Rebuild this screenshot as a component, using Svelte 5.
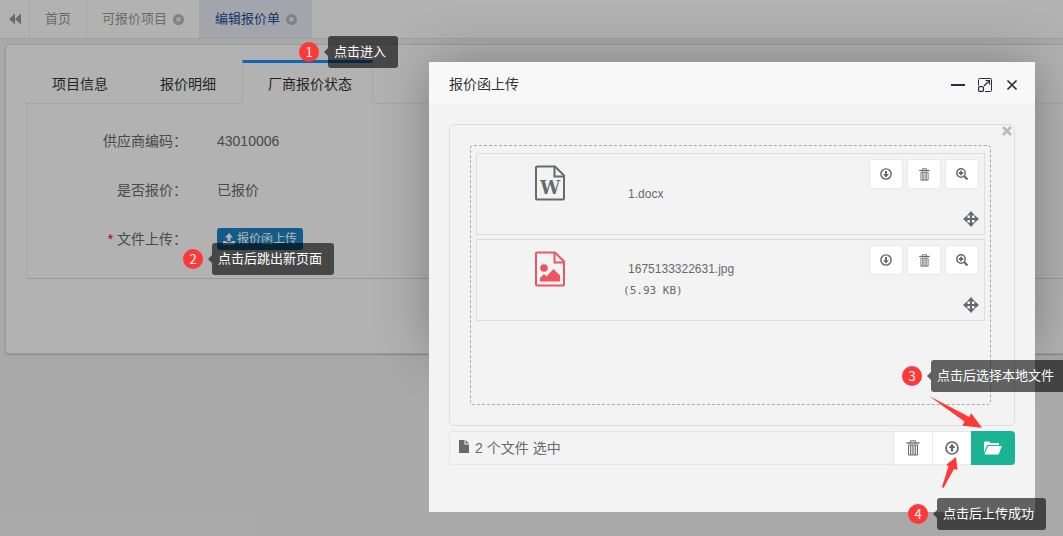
<script>
  let pages = [
    { title: '首页', closable: false },
    { title: '可报价项目', closable: true },
    { title: '编辑报价单', closable: true }
  ];
  let activePage = '编辑报价单';

  let sections = ['项目信息', '报价明细', '厂商报价状态'];
  let activeSection = '厂商报价状态';

  let files = [
    { name: '1.docx', type: 'word', size: '' },
    { name: '1675133322631.jpg', type: 'image', size: '(5.93 KB)' }
  ];
</script>

{#snippet trash(size)}
  <svg width={size} height={size} viewBox="0 0 16 16" fill="none" stroke="currentColor">
    <path d="M5.500 2.500V.8h5v1.700" />
    <path d="M1.500 3h13" stroke-width="1.400" />
    <path d="M3.500 5v10h9V5z" />
    <path d="M5.500 5v10M7.200 5v10M8.900 5v10M10.600 5v10" stroke-width=".9" />
  </svg>
{/snippet}

{#snippet circleArrow(size, up)}
  <svg width={size} height={size} viewBox="0 0 14 14">
    <circle cx="7" cy="7" r="6" fill="none" stroke="currentColor" stroke-width="1.700" />
    <path
      d={up ? 'M7 2.800L10.500 7H8.200v3.500H5.800V7H3.500z' : 'M7 11.200L3.500 7.200h2.300V3.500h2.400v3.700h2.300z'}
      fill="currentColor"
    />
  </svg>
{/snippet}

{#snippet note(number, text)}
  <span class="badge">{number}</span>
  <span class="tip">{text}</span>
{/snippet}

<div class="page">
  <nav class="pages">
    <button class="collapse" aria-label="向左">
      <svg width="12" height="12" viewBox="0 0 12 12" fill="currentColor">
        <path d="M6 .5v11L0 6zM12 .5v11L6 6z" />
      </svg>
    </button>
    {#each pages as page}
      <a href="#page" class:active={page.title === activePage}>
        {page.title}
        {#if page.closable}
          <svg width="11" height="11" viewBox="0 0 12 12">
            <circle cx="6" cy="6" r="6" fill="currentColor" />
            <path d="M4 4l4 4M8 4l-4 4" stroke="#fff" stroke-width="1.600" />
          </svg>
        {/if}
      </a>
    {/each}
  </nav>

  <main class="panel">
    <div class="sections">
      {#each sections as section}
        <button class:active={section === activeSection}>{section}</button>
      {/each}
    </div>
    <dl class="details">
      <dt>供应商编码：</dt>
      <dd>43010006</dd>
      <dt>是否报价：</dt>
      <dd>已报价</dd>
      <dt><span class="required">*</span> 文件上传：</dt>
      <dd>
        <button class="upload">
          <svg width="12" height="12" viewBox="0 0 12 12" fill="currentColor">
            <path d="M6 0l4 4.500H7.500V8h-3V4.500H2zM0 8h3.500v1.200h5V8H12v3.500H0z" />
          </svg>
          报价函上传
        </button>
      </dd>
    </dl>
  </main>

  <div class="shade"></div>
  <div class="note enter">{@render note(1, '点击进入')}</div>
  <div class="note popup">{@render note(2, '点击后跳出新页面')}</div>

  <section class="modal">
    <header>
      <h1>报价函上传</h1>
      <button aria-label="最小化">
        <svg width="14" height="14" viewBox="0 0 14 14"><path d="M0 6h14v2H0z" fill="currentColor" /></svg>
      </button>
      <button aria-label="最大化">
        <svg width="14" height="14" viewBox="0 0 14 14" fill="none" stroke="currentColor">
          <path d="M.5 7.500V1.500Q.5.5 1.500.5H12.500Q13.500.5 13.500 1.500V12.500Q13.500 13.500 12.500 13.500H7" />
          <rect x=".6" y="8.600" width="4.800" height="4.800" rx="1" stroke-width="1.200" />
          <path d="M6 8l5.500-5.500M7.500 2.500h4v4" stroke-width="1.200" />
        </svg>
      </button>
      <button aria-label="关闭">
        <svg width="14" height="14" viewBox="0 0 14 14" fill="none" stroke="currentColor" stroke-width="1.700">
          <path d="M2.500 2.500l9 9M11.500 2.500l-9 9" />
        </svg>
      </button>
    </header>

    <div class="body">
      <div class="preview">
        <button class="clear" aria-label="清空">
          <svg width="10" height="10" viewBox="0 0 10 10" stroke="currentColor" stroke-width="2.600">
            <path d="M1 1l8 8M9 1l-8 8" />
          </svg>
        </button>
        <div class="drop">
          {#each files as file}
            <div class="file">
              <div class="thumb {file.type}">
                <svg width="30" height="36" viewBox="0 0 30 36" fill="none" stroke="currentColor" stroke-width="2">
                  <path d="M2 1.500H20L29 10.500V33.500Q29 34.500 28 34.500H2Q1 34.500 1 33.500V2.500Q1 1.500 2 1.500z" />
                  <path d="M19.500 1.500V11.500H29" />
                  {#if file.type === 'word'}
                    <text x="15" y="29" text-anchor="middle" fill="currentColor" stroke="none">W</text>
                  {:else}
                    <circle cx="9" cy="17" r="3.800" fill="currentColor" stroke="none" />
                    <path d="M5 30.500V27l4-4 2.500 2.500 7-7.500 6.500 6.500v6z" fill="currentColor" stroke="none" />
                  {/if}
                </svg>
              </div>
              <div class="caption">
                <span class="name">{file.name}</span>
                {#if file.size}
                  <samp>{file.size}</samp>
                {/if}
              </div>
              <div class="tools">
                <div class="actions">
                  <button aria-label="下载">{@render circleArrow(12, false)}</button>
                  <button aria-label="删除">{@render trash(13)}</button>
                  <button aria-label="预览">
                    <svg width="12" height="12" viewBox="0 0 12 12" fill="none" stroke="currentColor">
                      <circle cx="5" cy="5" r="4.200" stroke-width="1.500" />
                      <path d="M5 2.800v4.400M2.800 5h4.400" stroke-width="1.800" />
                      <path d="M8 8l3.500 3.500" stroke-width="2.200" />
                    </svg>
                  </button>
                </div>
                <svg class="move" width="16" height="16" viewBox="0 0 16 16" fill="currentColor">
                  <path d="M8 0l4 4.500H9V7h2.500V4L16 8l-4.500 4V9H9v2.500h3L8 16l-4-4.500h3V9H4.500v3L0 8l4.500-4v3H7V4.500H4z" />
                </svg>
              </div>
            </div>
          {/each}
        </div>
      </div>

      <div class="bar">
        <div class="summary">
          <svg width="10" height="13" viewBox="0 0 10 13" fill="currentColor">
            <path d="M0 0h5.500v4.500H10V13H0zM6.500 0L10 3.500H6.500z" />
          </svg>
          2 个文件 选中
        </div>
        <button aria-label="移除">{@render trash(16)}</button>
        <button aria-label="上传">{@render circleArrow(14, true)}</button>
        <button class="browse" aria-label="选择">
          <svg width="20" height="14" viewBox="0 0 20 14" fill="currentColor">
            <path d="M1 12V1.500Q1 .5 2 .5h4l1.500 1.500H15q1 0 1 1V4H5Q4 4 3.600 5z" />
            <path d="M5 5h14L15.500 13.500H1.500z" />
          </svg>
        </button>

        <svg class="arrow down" width="54" height="33" viewBox="0 0 54 33">
          <path d="M0 0L40.500 21 42 17 53 31.700 33.500 29.700 35.500 25.500z" />
        </svg>
        <svg class="arrow up" width="17" height="32" viewBox="0 0 17 32">
          <path d="M14 0L15.500 13 12 12 1.500 31 0 30 6.500 9 4 8z" />
        </svg>
        <div class="note choose">{@render note(3, '点击后选择本地文件')}</div>
        <div class="note done">{@render note(4, '点击后上传成功')}</div>
      </div>
    </div>
  </section>
</div>

<style>
  :global(body) {
    background: #f3f3f4;
  }

  .page {
    position: relative;
    min-height: 100vh;
    overflow: hidden;
    font: 14px/20px "Liberation Sans", "Noto Sans CJK SC", sans-serif;
    color: #676a6c;
  }

  .page * {
    box-sizing: border-box;
  }

  svg {
    display: block;
    flex: none;
  }

  button {
    display: flex;
    align-items: center;
    justify-content: center;
    margin: 0;
    padding: 0;
    border: 0;
    background: none;
    font: inherit;
    color: inherit;
  }

  .pages {
    display: flex;
    height: 39px;
    background: #fff;
    border-bottom: 1px solid #e7e7e8;
    font-size: 13px;
    color: #999;
  }

  .collapse {
    width: 30px;
    border-right: 1px solid #eee;
  }

  .pages a {
    display: flex;
    align-items: center;
    gap: 6px;
    padding: 0 15px;
    border-right: 1px solid #eee;
    color: inherit;
    text-decoration: none;
  }

  .pages a svg {
    color: #bbb;
  }

  .pages a.active {
    border: 0;
    background: #eaedf6;
    color: #23508e;
  }

  .panel {
    height: 310px;
    margin: 5px 0 0 5px;
    padding: 15px 0 0 20px;
    border: 1px solid #ddd;
    border-right: 0;
    border-radius: 4px 0 0 4px;
    background: #fff;
    box-shadow: 0 1px 2px rgba(0, 0, 0, 0.2);
  }

  .sections {
    display: flex;
    gap: 5px;
    border-bottom: 1px solid #eee;
  }

  .sections button {
    height: 44px;
    margin-bottom: -1px;
    padding: 4px 20px 0 25px;
    border: 1px solid transparent;
    color: #333;
  }

  .sections button.active {
    padding-top: 2px;
    border-color: #eee;
    border-top: 3px solid #1890ff;
    border-bottom-color: #fff;
    background: #fff;
  }

  .details {
    display: grid;
    grid-template-columns: 160px 1fr;
    grid-auto-rows: 49px;
    column-gap: 30px;
    align-items: center;
    margin: 0;
    padding: 12px 0 15px;
    border: 1px solid #f4f4f4;
    border-width: 0 0 1px 1px;
    border-bottom-color: #ddd;
    border-radius: 0 0 0 4px;
  }

  dt {
    text-align: right;
  }

  dd {
    margin: 0;
  }

  .required {
    color: #f00;
  }

  .upload {
    gap: 2px;
    height: 22px;
    padding: 0 6px;
    border-radius: 3px;
    background: #1c84c6;
    font-size: 12px;
    color: #fff;
  }

  .shade {
    position: absolute;
    inset: 0;
    background: rgba(0, 0, 0, 0.3);
  }

  .note {
    position: absolute;
    z-index: 2;
    display: flex;
    align-items: center;
    gap: 9px;
    font: 13px/30px "Noto Sans CJK SC", sans-serif;
    color: #fff;
    white-space: nowrap;
  }

  .badge {
    width: 20px;
    border-radius: 10px;
    background: #ff3838;
    line-height: 20px;
    text-align: center;
  }

  .tip {
    position: relative;
    height: 32px;
    padding: 0 12px 0 6px;
    border-radius: 3px;
    background: rgba(0, 0, 0, 0.6);
  }

  .tip::before {
    content: '';
    position: absolute;
    top: 12px;
    left: -4px;
    border: 4px solid transparent;
    border-left: 0;
    border-right-color: rgba(0, 0, 0, 0.6);
  }

  .enter {
    top: 36px;
    left: 299px;
  }

  .popup {
    top: 243px;
    left: 183px;
  }

  .modal {
    position: absolute;
    z-index: 1;
    top: 62px;
    right: 28px;
    width: 57%;
  }

  /* the shadow only surrounds the upper part of the dialog */
  .modal::before {
    content: '';
    position: absolute;
    z-index: -1;
    inset: 0 0 160px;
    box-shadow: 1px 1px 50px rgba(0, 0, 0, 0.3);
  }

  .modal header {
    display: flex;
    align-items: center;
    gap: 13px;
    height: 42px;
    padding: 3px 16px 0 20px;
    background: #f8f8f8;
    color: #2e2d3c;
  }

  h1 {
    flex: 1;
    margin: 0;
    padding-bottom: 2px;
    font-size: 14px;
    font-weight: normal;
    color: #333;
  }

  .body {
    padding: 20px 20px 47px;
    background: #f3f3f3;
  }

  .preview {
    position: relative;
    padding: 20px 23px 20px 20px;
    border: 1px solid #ddd;
    border-radius: 5px;
  }

  .clear {
    position: absolute;
    top: 1px;
    right: 2px;
    color: #bbb;
  }

  .drop {
    display: flex;
    flex-direction: column;
    gap: 4px;
    min-height: 260px;
    padding: 7px 5px;
    border: 1px dashed #aaa;
    border-radius: 4px;
  }

  .file {
    display: flex;
    height: 82px;
    padding: 5px;
    border: 1px solid #ddd;
  }

  .thumb {
    width: 141px;
    padding: 6px 0 0 53px;
  }

  .thumb text {
    font: bold 18px "DejaVu Serif", serif;
  }

  .image {
    color: #ed5565;
  }

  .caption {
    flex: 1;
    display: flex;
    flex-direction: column;
    justify-content: center;
    font-size: 12px;
    line-height: 22px;
  }

  .name {
    padding-left: 5px;
  }

  samp {
    font: 11px/22px "DejaVu Sans Mono", monospace;
  }

  .tools {
    display: flex;
    flex-direction: column;
    justify-content: space-between;
    align-items: flex-end;
  }

  .actions {
    display: flex;
    gap: 4px;
  }

  .actions button {
    width: 34px;
    height: 30px;
    border: 1px solid #e7eaec;
    border-radius: 3px;
    background: #fff;
  }

  .move {
    margin-bottom: 2px;
  }

  .bar {
    position: relative;
    display: flex;
    height: 34px;
    margin-top: 5px;
  }

  .summary {
    flex: 1;
    display: flex;
    align-items: center;
    gap: 6px;
    padding-left: 9px;
    border: 1px solid #e5e6e7;
    border-right: 0;
    border-radius: 4px 0 0 4px;
  }

  .summary svg {
    margin-bottom: 4px;
  }

  .bar button {
    width: 39px;
    border: 1px solid #e7eaec;
    border-right: 0;
    background: #fff;
  }

  .bar .browse {
    width: 44px;
    border: 0;
    border-radius: 0 4px 4px 0;
    background: #1ab394;
    color: #fff;
  }

  .arrow {
    position: absolute;
    z-index: 2;
    fill: #ff3838;
  }

  .down {
    top: -35px;
    right: 32px;
  }

  .up {
    top: 26px;
    right: 56px;
  }

  .choose {
    top: -71px;
    right: -51px;
  }

  .done {
    top: 67px;
    right: -31px;
  }
</style>
